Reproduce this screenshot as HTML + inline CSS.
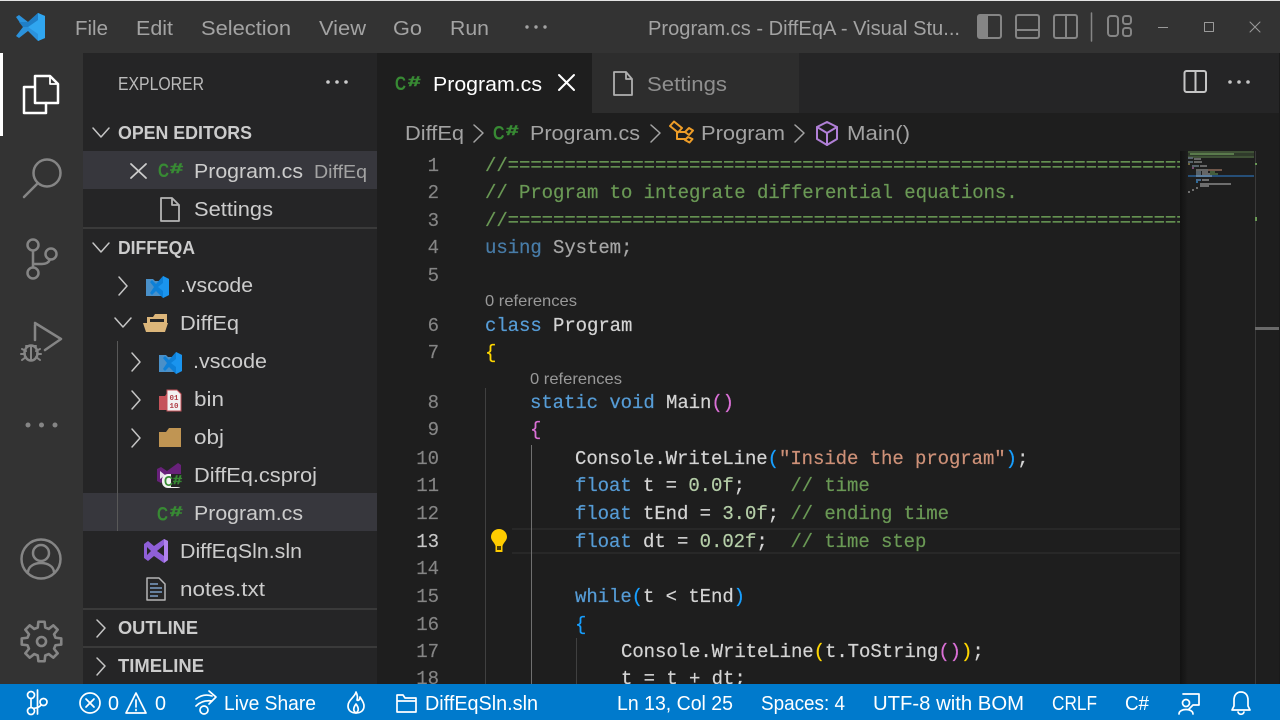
<!DOCTYPE html>
<html><head><meta charset="utf-8"><title>Program.cs - DiffEqA</title>
<style>
html,body{margin:0;padding:0;background:#1e1e1e;width:1280px;height:720px;overflow:hidden}
svg{display:block}
text{font-family:"Liberation Sans",sans-serif;white-space:pre}
.m{font-size:20px;fill:#a3a3a3}
.t{font-size:20px;fill:#cccccc}
.h{font-size:18px;font-weight:bold;fill:#cccccc}
.s{font-size:20px;fill:#ffffff}
.c{font-family:"Liberation Mono",monospace;font-size:19px;letter-spacing:-.07px;fill:#d4d4d4;stroke:#d4d4d4;stroke-width:.2px}
.n{font-family:"Liberation Mono",monospace;font-size:19px;fill:#858585;stroke:#858585;stroke-width:.15px;text-anchor:end}
.cm{fill:#6a9955;stroke:#6a9955}.k{fill:#569cd6;stroke:#569cd6}.nb{fill:#b5cea8;stroke:#b5cea8}.st{fill:#ce9178;stroke:#ce9178}.g{fill:#ffd700;stroke:#ffd700}.p{fill:#da70d6;stroke:#da70d6}.b{fill:#179fff;stroke:#179fff}
.r{font-size:16px;fill:#999999}
.ln{fill:none;stroke-linecap:round;stroke-linejoin:round}
.cs{font-weight:bold;fill:#388a34}
.csh{font-weight:bold;fill:#388a34;stroke:#388a34;stroke-width:.5px;font-size:14px}
</style></head><body>
<svg width="1280" height="720" viewBox="0 0 1280 720" xmlns="http://www.w3.org/2000/svg">
<defs>
<linearGradient id="sh" x1="0" x2="1" y1="0" y2="0"><stop offset="0" stop-color="#121212"/><stop offset="1" stop-color="#1e1e1e"/></linearGradient>
<clipPath id="code"><rect x="470" y="150" width="710" height="534"/></clipPath>
</defs>

<!-- base -->
<rect width="1280" height="720" fill="#1e1e1e"/>
<rect width="1280" height="53" fill="#333333"/>
<rect width="1280" height="1" fill="#e4e4e4"/>
<rect y="53" width="83" height="631" fill="#333333"/>
<rect x="83" y="53" width="294" height="631" fill="#252526"/>
<rect x="377" y="53" width="903" height="60" fill="#252526"/>
<rect x="592" y="53" width="207" height="60" fill="#2d2d2d"/>
<rect x="377" y="53" width="215" height="60" fill="#1e1e1e"/>

<!-- title bar -->
<path d="M38 13 28 22 19 15 16 17 23 27 16 36 19 38 28 31 38 41 45 38V16Z" fill="#2b92dc"/>
<path d="M38 13 45 16V38L38 41 38 20 28 27 38 34Z" fill="#30a6f0"/>
<path d="M38 13 38 20 28 27 23 27 19 22 28 22Z" fill="#1f7fc8"/>
<text class="m" x="75" y="35" textLength="33" lengthAdjust="spacingAndGlyphs">File</text>
<text class="m" x="136" y="35" textLength="37" lengthAdjust="spacingAndGlyphs">Edit</text>
<text class="m" x="201" y="35" textLength="90" lengthAdjust="spacingAndGlyphs">Selection</text>
<text class="m" x="319" y="35" textLength="47" lengthAdjust="spacingAndGlyphs">View</text>
<text class="m" x="393" y="35" textLength="29" lengthAdjust="spacingAndGlyphs">Go</text>
<text class="m" x="450" y="35" textLength="39" lengthAdjust="spacingAndGlyphs">Run</text>
<g fill="#a3a3a3"><circle cx="527" cy="27" r="1.7"/><circle cx="536" cy="27" r="1.7"/><circle cx="545" cy="27" r="1.7"/></g>
<text class="m" x="648" y="35" textLength="312" lengthAdjust="spacingAndGlyphs">Program.cs - DiffEqA - Visual Stu...</text>
<g class="ln" stroke="#858585" stroke-width="2">
<rect x="978" y="15" width="23" height="23" rx="2"/>
<rect x="1016" y="15" width="23" height="23" rx="2"/><path d="M1016 30H1039"/>
<rect x="1054" y="15" width="23" height="23" rx="2"/><path d="M1066 15V38"/>
<path d="M1091.500 13V41" stroke-width="1.500"/>
<rect x="1108" y="16" width="10" height="20" rx="3"/>
<rect x="1123" y="16" width="8" height="8" rx="2.500"/>
<rect x="1123" y="28" width="8" height="8" rx="2.500"/>
</g>
<rect x="978" y="15" width="10" height="23" fill="#858585"/>
<g class="ln" stroke="#9a9a9a" stroke-width="1">
<path d="M1158 27.500H1168" stroke-linecap="butt"/>
<rect x="1204.500" y="22.500" width="9" height="9"/>
<path d="M1250 22 1260 32M1260 22 1250 32"/>
</g>

<!-- activity bar -->
<rect y="53" width="3" height="83" fill="#ffffff"/>
<g class="ln" stroke="#ffffff" stroke-width="2.500">
<path d="M34 87H24V113H46V103"/>
<path d="M35 76V103H58V84L50 76Z"/>
<path d="M50 76V84H58" stroke-width="1.800"/>
</g>
<g class="ln" stroke="#858585" stroke-width="2.500">
<circle cx="47" cy="173" r="13.500"/>
<path d="M37 184 24 197"/>
<circle cx="33" cy="245" r="5.500"/><circle cx="33" cy="273" r="5.500"/><circle cx="51" cy="254" r="5.500"/>
<path d="M33 251V267M33 264H42Q48 264 50 259.500"/>
<path d="M35 325V340M35 323 61 339 45 350"/>
<ellipse cx="31" cy="353" rx="6.500" ry="7.500"/>
<path d="M26 346H36M22 349 26 351M40 349 36 351M21 354H25M37 354H41M22 360 26 357M40 360 36 357M31 347V360" stroke-width="2"/>
<circle cx="41" cy="559" r="19.500"/>
<circle cx="41" cy="553" r="8"/>
<path d="M28 572C29 560 53 560 54 572"/>
</g>
<g fill="#858585"><circle cx="28" cy="425" r="2.500"/><circle cx="41.500" cy="425" r="2.500"/><circle cx="55" cy="425" r="2.500"/></g>
<g transform="translate(41.500,641.500)" fill="none" stroke="#858585" stroke-width="2.600" stroke-linejoin="round">
<path d="M-3.750 -14-3.100 -19.750H3.100L3.750 -14 7.250 -12.550 11.770 -16.160 16.160 -11.770 12.550 -7.250 14 -3.750 19.750 -3.100V3.100L14 3.750 12.550 7.250 16.160 11.770 11.770 16.160 7.250 12.550 3.750 14 3.100 19.750H-3.100L-3.750 14-7.250 12.550-11.770 16.160-16.160 11.770-12.550 7.250-14 3.750-19.750 3.100V-3.100L-14 -3.750-12.550 -7.250-16.160 -11.770-11.770 -16.160-7.250 -12.550Z"/>
<circle r="4.500"/>
</g>

<!-- sidebar -->
<text x="118" y="90" font-size="18" fill="#bbbbbb" textLength="86" lengthAdjust="spacingAndGlyphs">EXPLORER</text>
<g fill="#cccccc"><circle cx="328" cy="82" r="1.800"/><circle cx="337" cy="82" r="1.800"/><circle cx="346" cy="82" r="1.800"/></g>

<rect x="83" y="151" width="294" height="38" fill="#37373d"/>
<rect x="83" y="493" width="294" height="38" fill="#37373d"/>
<rect x="83" y="227" width="294" height="2" fill="#3a3a3a"/>
<rect x="83" y="608" width="294" height="2" fill="#3a3a3a"/>
<rect x="83" y="646" width="294" height="2" fill="#3a3a3a"/>
<rect x="117" y="341" width="1" height="190" fill="#585858"/>

<g class="ln" stroke="#c5c5c5" stroke-width="1.500">
<path d="M93 128 101 137 109 128"/>
<path d="M93 243 101 252 109 243"/>
<path d="M119 277 127 286 119 295"/>
<path d="M115 318 123 327 131 318"/>
<path d="M132 353 140 362 132 371"/>
<path d="M132 391 140 400 132 409"/>
<path d="M132 429 140 438 132 447"/>
<path d="M97 620 105 628 97 637"/>
<path d="M97 658 105 666 97 675"/>
<path d="M131 164 146 178M146 164 131 178" stroke="#cccccc" stroke-width="1.800"/>
</g>
<text class="h" x="118" y="139" textLength="134" lengthAdjust="spacingAndGlyphs">OPEN EDITORS</text>
<text class="h" x="118" y="254" textLength="77" lengthAdjust="spacingAndGlyphs">DIFFEQA</text>
<text class="h" x="118" y="634" textLength="80" lengthAdjust="spacingAndGlyphs">OUTLINE</text>
<text class="h" x="118" y="672" textLength="86" lengthAdjust="spacingAndGlyphs">TIMELINE</text>

<!-- open editors -->
<text class="cs" x="158" y="177" font-size="19.500" textLength="11" lengthAdjust="spacingAndGlyphs">C</text><text class="csh" x="170" y="173" textLength="13" lengthAdjust="spacingAndGlyphs">#</text>
<text class="t" x="194" y="178" textLength="109" lengthAdjust="spacingAndGlyphs">Program.cs</text>
<text x="314" y="178" font-size="18.500" fill="#a3a3a3" textLength="53" lengthAdjust="spacingAndGlyphs">DiffEq</text>
<path class="ln" stroke="#b5b5b5" stroke-width="1.800" d="M161 198H172L179 205V221H161ZM172 198V205H179"/>
<text class="t" x="194" y="216" textLength="79" lengthAdjust="spacingAndGlyphs">Settings</text>

<!-- tree -->
<g>
<path d="M146 279H153L155 281H166V296H146Z" fill="#4a90c8"/>
<path d="M163 276 169 279V295L163 298 156 291 152 295 150 293 154 287 150 282 152 280 156 284Z" fill="#0d80d8"/>
<path d="M163 276 169 279V295L163 298V291L158 287 163 283Z" fill="#1a94ee"/>
</g>
<text class="t" x="180" y="292" textLength="73" lengthAdjust="spacingAndGlyphs">.vscode</text>
<path d="M147 323V317H153L155 314H167V323Z" fill="#dcb67a"/>
<rect x="150" y="319" width="14" height="3" fill="#252526"/>
<path d="M143 323H168L165 332H146Z" fill="#dcb67a"/>
<text class="t" x="180" y="330" textLength="59" lengthAdjust="spacingAndGlyphs">DiffEq</text>
<g transform="translate(13,76)">
<path d="M146 279H153L155 281H166V296H146Z" fill="#4a90c8"/>
<path d="M163 276 169 279V295L163 298 156 291 152 295 150 293 154 287 150 282 152 280 156 284Z" fill="#0d80d8"/>
<path d="M163 276 169 279V295L163 298V291L158 287 163 283Z" fill="#1a94ee"/>
</g>
<text class="t" x="193" y="368" textLength="74" lengthAdjust="spacingAndGlyphs">.vscode</text>
<path d="M159 396H165L167 393H172V410H159Z" fill="#c5535a"/>
<path d="M167 390H177L181 394V411H167Z" fill="#f2f2f2"/>
<path d="M167 390H177L181 394V411H167Z" fill="none" stroke="#c5535a" stroke-width="1"/>
<text x="169.500" y="400" font-size="7.500" font-weight="bold" fill="#b04048" style="font-family:'Liberation Mono',monospace">01</text>
<text x="169.500" y="408" font-size="7.500" font-weight="bold" fill="#b04048" style="font-family:'Liberation Mono',monospace">10</text>
<text class="t" x="194" y="406" textLength="30" lengthAdjust="spacingAndGlyphs">bin</text>
<path d="M159 432H166L169 428H181V447H159Z" fill="#c09553"/>
<text class="t" x="194" y="444" textLength="30" lengthAdjust="spacingAndGlyphs">obj</text>
<path d="M157 469 161 467 167 471 178 463 181 465V478H167L161 483 157 481Z" fill="#68217a"/>
<path d="M160 471 165 475 160 479Z" fill="#e6e0ea"/>
<rect x="162" y="474" width="21" height="14" rx="6" fill="#f2f2f2"/>
<rect x="171" y="474" width="13" height="13" fill="#252526"/>
<text class="cs" x="164" y="486" font-size="15" textLength="9" lengthAdjust="spacingAndGlyphs">C</text>
<text class="csh" x="173" y="484" style="font-size:12px" textLength="9" lengthAdjust="spacingAndGlyphs">#</text>
<text class="t" x="194" y="482" textLength="123" lengthAdjust="spacingAndGlyphs">DiffEq.csproj</text>
<text class="cs" x="157" y="520.500" font-size="19.500" textLength="11" lengthAdjust="spacingAndGlyphs">C</text><text class="csh" x="170" y="516" textLength="12.500" lengthAdjust="spacingAndGlyphs">#</text>
<text class="t" x="194" y="520" textLength="109" lengthAdjust="spacingAndGlyphs">Program.cs</text>
<path d="M144 544 148 541 154 546 164 539 168 541V560L164 563 154 556 148 561 144 558Z" fill="#8f5fd8"/>
<path d="M164 545 157 551 164 556Z" fill="#252526"/>
<path d="M147 547V555L151 551Z" fill="#252526"/>
<path d="M164 539 168 541V560L164 563Z" fill="#b183ee"/>
<text class="t" x="180" y="558" textLength="122" lengthAdjust="spacingAndGlyphs">DiffEqSln.sln</text>
<path class="ln" stroke="#b5b5b5" stroke-width="1.500" d="M147 578H159L165 584V600H147Z"/>
<path d="M150 584H158M150 588H162M150 592H162M150 596H158" stroke="#7d9fc5" stroke-width="1.500"/>
<text class="t" x="180" y="596" textLength="85" lengthAdjust="spacingAndGlyphs">notes.txt</text>

<!-- tabs -->
<text class="cs" x="395" y="90" font-size="19.500" textLength="11" lengthAdjust="spacingAndGlyphs">C</text><text class="csh" x="408" y="86" textLength="12.500" lengthAdjust="spacingAndGlyphs">#</text>
<text x="433" y="91" font-size="20" fill="#ffffff" textLength="109" lengthAdjust="spacingAndGlyphs">Program.cs</text>
<path class="ln" stroke="#ffffff" stroke-width="2" d="M559 75 574 90M574 75 559 90"/>
<path class="ln" stroke="#b0b0b0" stroke-width="1.800" d="M614 72H626L632 79V95H614ZM626 72V79H632"/>
<text x="647" y="91" font-size="20" fill="#8f8f8f" textLength="80" lengthAdjust="spacingAndGlyphs">Settings</text>
<g class="ln" stroke="#c5c5c5" stroke-width="2">
<rect x="1184.500" y="71" width="21.500" height="21" rx="2"/><path d="M1195.500 71V92"/>
</g>
<g fill="#c5c5c5"><circle cx="1230" cy="82" r="1.800"/><circle cx="1239" cy="82" r="1.800"/><circle cx="1248" cy="82" r="1.800"/></g>

<!-- breadcrumb -->
<text x="405" y="140" font-size="20" fill="#a3a3a3" textLength="59" lengthAdjust="spacingAndGlyphs">DiffEq</text>
<text class="cs" x="493" y="139.500" font-size="19.500" textLength="11.500" lengthAdjust="spacingAndGlyphs">C</text><text class="csh" x="506" y="135" textLength="12.500" lengthAdjust="spacingAndGlyphs">#</text>
<text x="530" y="140" font-size="20" fill="#a3a3a3" textLength="110" lengthAdjust="spacingAndGlyphs">Program.cs</text>
<text x="701" y="140" font-size="20" fill="#a3a3a3" textLength="84" lengthAdjust="spacingAndGlyphs">Program</text>
<text x="847" y="140" font-size="20" fill="#a3a3a3" textLength="63" lengthAdjust="spacingAndGlyphs">Main()</text>
<g class="ln" stroke="#a3a3a3" stroke-width="1.500">
<path d="M474 125 483 133 474 142"/><path d="M651 125 660 133 651 142"/><path d="M795 125 804 133 795 142"/>
</g>
<g class="ln" stroke="#ee9d28" stroke-width="2">
<path d="M670 126 674 121.500 682 128 678 132.500Z"/>
<path d="M685 132 689 128 693 130.500 689 135Z"/>
<path d="M685 140 688 137 692.500 139 689.500 142.500Z"/>
<path d="M677 132V139H685M680 132H685"/>
</g>
<g class="ln" stroke="#b180d7" stroke-width="2">
<path d="M827 122 837 127V139L827 145 817 139V127Z"/><path d="M817 127 827 133 837 127M827 133V145"/>
</g>

<!-- editor -->
<rect x="512" y="528" width="668" height="2" fill="#282828"/>
<rect x="512" y="552" width="668" height="2" fill="#282828"/>
<rect x="485" y="388" width="1" height="296" fill="#404040"/>
<rect x="531" y="445" width="1" height="239" fill="#707070"/>
<rect x="576" y="638" width="1" height="46" fill="#404040"/>
<rect x="486" y="528" width="26" height="26" fill="#1e1e1e"/>
<rect x="485" y="528" width="1" height="26" fill="#404040"/>
<path d="M499 529C494.500 529 491 532.500 491 537 491 540.500 494.500 542.500 495.500 546V552H502.500V546C503.500 542.500 507 540.500 507 537 507 532.500 503.500 529 499 529Z" fill="#ffcc00"/>
<rect x="497" y="546" width="4" height="4" fill="#4a3d05"/>

<g>
<text class="n" x="439" y="171">1</text><text class="n" x="439" y="198">2</text><text class="n" x="439" y="226">3</text><text class="n" x="439" y="253">4</text><text class="n" x="439" y="281">5</text>
<text class="n" x="439" y="331">6</text><text class="n" x="439" y="358">7</text><text class="n" x="439" y="408">8</text><text class="n" x="439" y="435">9</text><text class="n" x="439" y="464">10</text>
<text class="n" x="439" y="491">11</text><text class="n" x="439" y="519">12</text><text class="n" x="439" y="547" style="fill:#c6c6c6;stroke:#c6c6c6">13</text><text class="n" x="439" y="574">14</text><text class="n" x="439" y="602">15</text>
<text class="n" x="439" y="630">16</text><text class="n" x="439" y="657">17</text><text class="n" x="439" y="684">18</text>
</g>
<g clip-path="url(#code)">
<text class="c cm" x="485" y="171">//===================================================================</text>
<text class="c cm" x="485" y="198">// Program to integrate differential equations.</text>
<text class="c cm" x="485" y="226">//===================================================================</text>
<text class="c" x="485" y="253" opacity=".75"><tspan class="k">using</tspan> System;</text>
<text class="c" x="485" y="331"><tspan class="k">class</tspan> Program</text>
<text class="c g" x="485" y="358">{</text>
<text class="c" x="530" y="408"><tspan class="k">static</tspan> <tspan class="k">void</tspan> Main<tspan class="p">()</tspan></text>
<text class="c p" x="530" y="435">{</text>
<text class="c" x="575" y="464">Console.WriteLine<tspan class="b">(</tspan><tspan class="st">"Inside the program"</tspan><tspan class="b">)</tspan>;</text>
<text class="c" x="575" y="491"><tspan class="k">float</tspan> t = <tspan class="nb">0.0f</tspan>;    <tspan class="cm">// time</tspan></text>
<text class="c" x="575" y="519"><tspan class="k">float</tspan> tEnd = <tspan class="nb">3.0f</tspan>; <tspan class="cm">// ending time</tspan></text>
<text class="c" x="575" y="547"><tspan class="k">float</tspan> dt = <tspan class="nb">0.02f</tspan>;  <tspan class="cm">// time step</tspan></text>
<text class="c" x="575" y="602"><tspan class="k">while</tspan><tspan class="b">(</tspan>t &lt; tEnd<tspan class="b">)</tspan></text>
<text class="c b" x="575" y="630">{</text>
<text class="c" x="621" y="657">Console.WriteLine<tspan class="g">(</tspan>t.ToString<tspan class="p">()</tspan><tspan class="g">)</tspan>;</text>
<text class="c" x="621" y="684">t = t + dt;</text>
</g>
<text class="r" x="485" y="306" textLength="92" lengthAdjust="spacingAndGlyphs">0 references</text>
<text class="r" x="530" y="384" textLength="92" lengthAdjust="spacingAndGlyphs">0 references</text>

<!-- minimap -->
<rect x="1180" y="151" width="8" height="533" fill="url(#sh)"/>
<rect x="1188" y="151" width="66" height="2" fill="#3f5136"/>
<rect x="1188" y="153" width="66" height="3" fill="#2f3a2b"/>
<rect x="1190" y="153" width="44" height="2" fill="#5a7a4c"/>
<rect x="1188" y="156" width="66" height="2" fill="#3f5136"/>
<g fill="#5d6a74" opacity=".9">
<rect x="1188" y="157" width="5" height="2"/><rect x="1194" y="158" width="7" height="2" fill="#6e6e6e"/>
<rect x="1188" y="161" width="5" height="2"/><rect x="1194" y="161" width="8" height="2" fill="#6e6e6e"/>
<rect x="1188" y="163" width="2" height="2" fill="#7a7040"/>
<rect x="1192" y="165" width="7" height="2"/><rect x="1200" y="165" width="7" height="2" fill="#6e6e6e"/>
<rect x="1192" y="167" width="2" height="2" fill="#80507c"/>
<rect x="1196" y="169" width="12" height="2" fill="#6e6e6e"/><rect x="1208" y="169" width="14" height="2" fill="#7a5e50"/>
<rect x="1196" y="171" width="5" height="2"/><rect x="1202" y="171" width="6" height="2" fill="#6e6e6e"/><rect x="1210" y="171" width="5" height="2" fill="#4a6440"/>
<rect x="1196" y="173" width="5" height="2"/><rect x="1202" y="173" width="8" height="2" fill="#6e6e6e"/><rect x="1210" y="173" width="8" height="2" fill="#4a6440"/>
</g>
<rect x="1188" y="175" width="66" height="2" fill="#264f78"/>
<rect x="1196" y="175" width="16" height="2" fill="#5d7f9f"/>
<g fill="#6e6e6e">
<rect x="1196" y="179" width="5" height="2" fill="#4a6a8c"/><rect x="1202" y="179" width="7" height="2"/>
<rect x="1196" y="181" width="2" height="2" fill="#2a6a9a"/>
<rect x="1200" y="183" width="31" height="2"/>
<rect x="1200" y="185" width="9" height="2"/>
<rect x="1196" y="187" width="2" height="2"/>
<rect x="1192" y="189" width="2" height="2"/>
<rect x="1188" y="191" width="2" height="2"/>
</g>
<rect x="1255" y="151" width="1" height="533" fill="#3a3a3a"/>
<rect x="1255" y="163" width="2" height="2" fill="#6a9955"/>
<rect x="1255" y="217" width="2" height="4" fill="#6a9955"/>
<rect x="1255" y="327" width="25" height="3" fill="#6a6a6a"/>
<rect x="1279" y="53" width="1" height="631" fill="#1a1a1a"/>

<!-- status bar -->
<rect y="684" width="1280" height="36" fill="#007acc"/>
<g class="ln" stroke="#ffffff" stroke-width="1.700">
<circle cx="31" cy="695" r="3.500"/><circle cx="31" cy="711" r="3.500"/><circle cx="43.500" cy="702" r="3.500"/>
<path d="M31 698.500V707.500M37.500 690V714M41 705C39 708 35 708 33.500 708.500"/>
<circle cx="90" cy="703" r="10"/><path d="M86 699 94 707M94 699 86 707"/>
<path d="M136 693 146 713H126Z"/><path d="M136 700V707M136 709.500V710.500"/>
<path d="M196 699C201 695 206 694 212 696M196 706C200 702 205 700 212 701"/>
<circle cx="204" cy="710" r="4"/>
<path d="M209 691 216 697 209 704"/>
<path d="M356 692C355 697 348 700 348 706 348 711 352 713 356 713 360 713 364 711 364 706 364 702 361 699 360 697 360 700 358 701 357 700 358 697 357 694 356 692Z"/>
<path d="M356 713C353 711 353 708 356 704 359 708 359 711 356 713Z"/>
<path d="M397 696V712H416V698H405L403 695H397ZM397 701H416"/>
<path d="M1183 694H1199V705H1193L1189 709"/>
<circle cx="1186" cy="703" r="3.500"/><path d="M1179 714C1179 708 1193 708 1193 714"/>
<path d="M1241 692C1236 692 1234 696 1234 700V706L1232 710H1250L1248 706V700C1248 696 1246 692 1241 692ZM1238 712C1239 715 1243 715 1244 712"/>
</g>
<text class="s" x="108" y="710" textLength="11" lengthAdjust="spacingAndGlyphs">0</text>
<text class="s" x="155" y="710" textLength="11" lengthAdjust="spacingAndGlyphs">0</text>
<text class="s" x="224" y="710" textLength="92" lengthAdjust="spacingAndGlyphs">Live Share</text>
<text class="s" x="425" y="710" textLength="113" lengthAdjust="spacingAndGlyphs">DiffEqSln.sln</text>
<text class="s" x="617" y="710" textLength="116" lengthAdjust="spacingAndGlyphs">Ln 13, Col 25</text>
<text class="s" x="761" y="710" textLength="84" lengthAdjust="spacingAndGlyphs">Spaces: 4</text>
<text class="s" x="873" y="710" textLength="151" lengthAdjust="spacingAndGlyphs">UTF-8 with BOM</text>
<text class="s" x="1052" y="710" textLength="45" lengthAdjust="spacingAndGlyphs">CRLF</text>
<text class="s" x="1125" y="710" textLength="24" lengthAdjust="spacingAndGlyphs">C#</text>
</svg>
</body></html>
